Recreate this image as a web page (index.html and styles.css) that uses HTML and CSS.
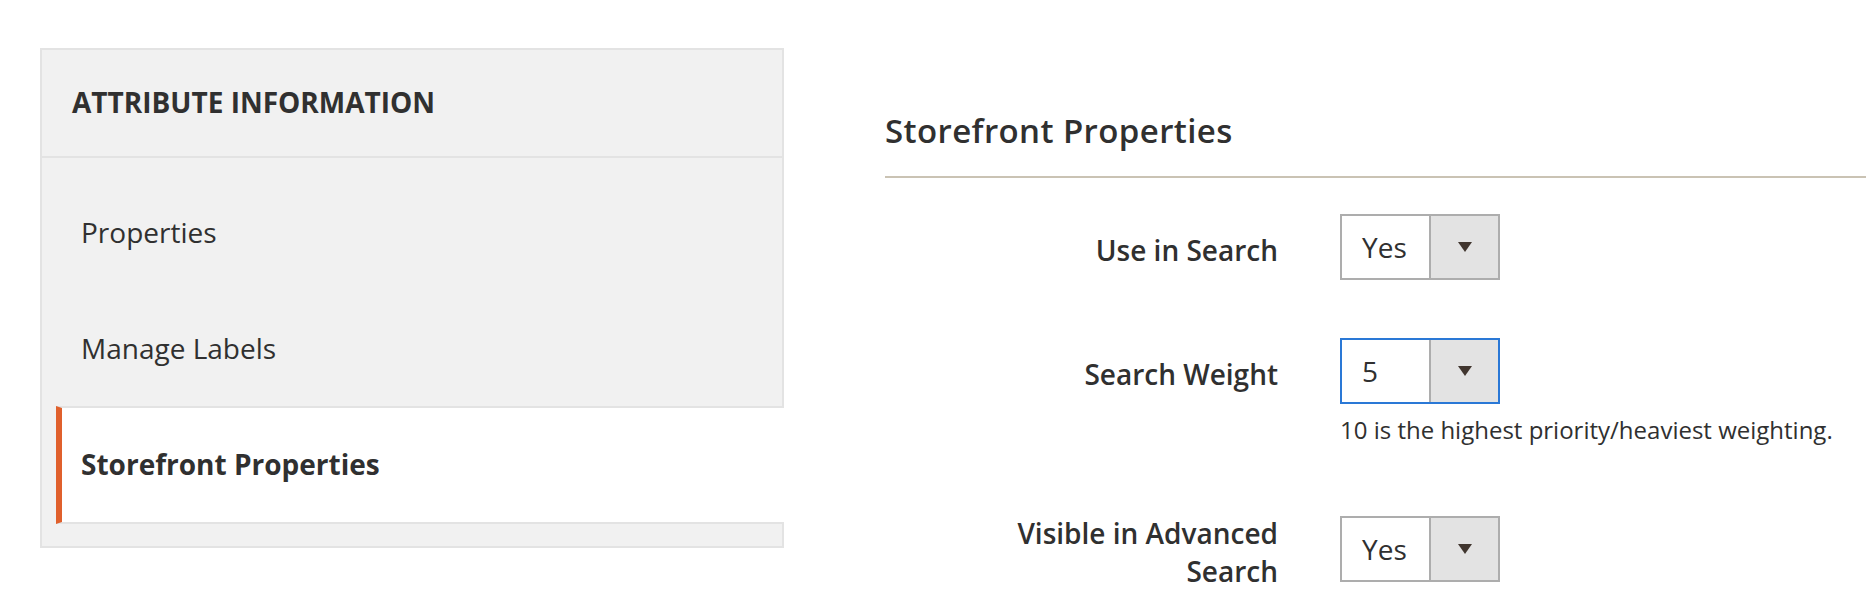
FILE: index.html
```html
<!DOCTYPE html>
<html lang="en">
<head>
<meta charset="utf-8">
<title>Storefront Properties</title>
<link rel="stylesheet" href="styles.css">
</head>
<body>
<div class="page">
  <nav class="side-nav">
    <div class="side-nav-title">Attribute Information</div>
    <ul class="side-nav-items">
      <li class="side-nav-item">Properties</li>
      <li class="side-nav-item">Manage Labels</li>
      <li class="side-nav-item is-active">Storefront Properties</li>
    </ul>
  </nav>
  <section class="content">
    <h2 class="legend">Storefront Properties</h2>
    <div class="fields">
      <div class="field">
        <label class="field-label">Use in Search</label>
        <div class="select"><span class="select-value">Yes</span><span class="select-arrow"></span></div>
      </div>
      <div class="field field-with-note">
        <label class="field-label">Search Weight</label>
        <div class="select is-focused"><span class="select-value">5</span><span class="select-arrow"></span></div>
        <div class="field-note">10 is the highest priority/heaviest weighting.</div>
      </div>
      <div class="field">
        <label class="field-label">Visible in Advanced Search</label>
        <div class="select"><span class="select-value">Yes</span><span class="select-arrow"></span></div>
      </div>
    </div>
  </section>
</div>
</body>
</html>
```
FILE: styles.css
```css
* { box-sizing: border-box; }

body {
  margin: 0;
  background: #fff;
  color: #303030;
  font-family: "Open Sans", "Liberation Sans", sans-serif;
}

.page {
  display: flex;
  align-items: flex-start;
  padding: 48px 0 0 40px;
}

/* ---------- left navigation ---------- */
.side-nav {
  flex: none;
  width: 744px;
  background: #f1f1f1;
  border: 2px solid #e3e3e3;
}

.side-nav-title {
  padding: 33px 30px 35px;
  border-bottom: 2px solid #e3e3e3;
  font-size: 28px;
  font-weight: 700;
  line-height: 38px;
  text-transform: uppercase;
}

.side-nav-items {
  list-style: none;
  margin: 0;
  padding: 16px 0 22px 14px;
}

.side-nav-item {
  padding: 37px 20px 37px 19px;
  border-left: 6px solid transparent;
  border-top: 2px solid transparent;
  border-bottom: 2px solid transparent;
  font-size: 28px;
  line-height: 38px;
}

.side-nav-item.is-active {
  margin-right: -2px;
  padding-bottom: 39px;
  background: #fff;
  border-left-color: #e0602c;
  border-top-color: #e3e3e3;
  border-bottom-color: #e3e3e3;
  font-weight: 700;
}

/* ---------- right content ---------- */
.content {
  flex: 1;
  margin: 61px 0 0 101px;
}

.legend {
  margin: 0;
  padding-bottom: 23px;
  border-bottom: 2px solid #cac3b4;
  font-size: 33px;
  font-weight: 600;
  letter-spacing: 0.4px;
  line-height: 44px;
}

.fields {
  padding: 36px 0 0 93px;
}

.field {
  display: grid;
  grid-template-columns: 300px 160px;
  column-gap: 62px;
  align-items: center;
  margin-bottom: 58px;
}

.field:last-child {
  margin-bottom: 0;
}

.field-with-note {
  margin-bottom: 62px;
}

.field-label {
  margin-top: 6px;
  font-size: 28px;
  font-weight: 600;
  line-height: 38px;
  text-align: right;
}

.field-note {
  grid-column: 2;
  width: max-content;
  margin-top: 9px;
  font-size: 24px;
  line-height: 33px;
}

/* ---------- select ---------- */
.select {
  display: flex;
  height: 66px;
  background: #fff;
  border: 2px solid #adadad;
}

.select.is-focused {
  border-color: #2a78d6;
}

.select-value {
  flex: 1;
  display: flex;
  align-items: center;
  padding-left: 20px;
  font-size: 28px;
  line-height: 38px;
}

.select-arrow {
  flex: none;
  width: 69px;
  display: flex;
  align-items: center;
  justify-content: center;
  background: #e3e3e3;
  border-left: 2px solid #adadad;
}

.select-arrow::after {
  content: "";
  border-left: 7px solid transparent;
  border-right: 7px solid transparent;
  border-top: 10px solid #41362f;
}
```
